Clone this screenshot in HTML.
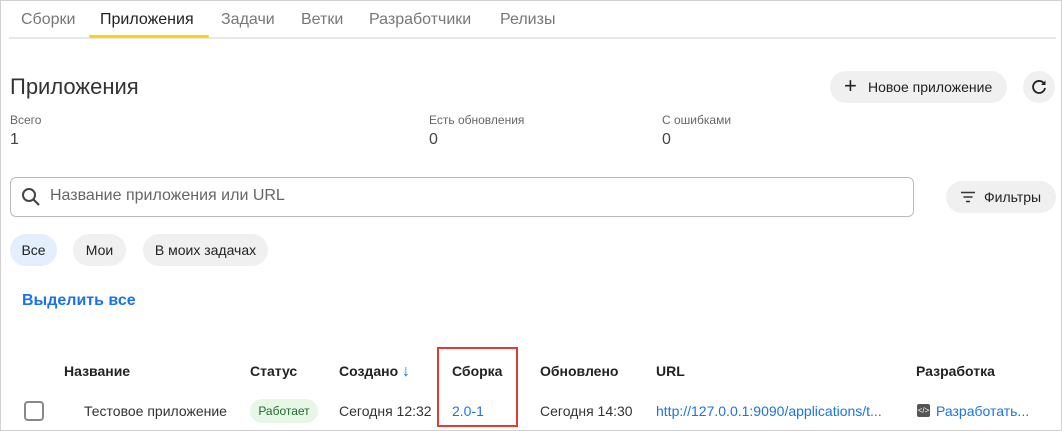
<!DOCTYPE html>
<html><head><meta charset="utf-8"><style>
*{margin:0;padding:0;box-sizing:border-box}
body{width:1062px;height:430px;overflow:hidden;background:#fff;font-family:"Liberation Sans",sans-serif;color:#222;position:relative}
.a{position:absolute;white-space:nowrap}
.tab{font-size:16px;color:#777;top:11px}
.chip{position:absolute;top:234px;height:32px;border-radius:16px;background:#f0f0f0;font-size:14px;line-height:32px;text-align:center;color:#222}
.th{top:363px;font-size:14px;font-weight:bold;color:#222}
.td{top:403px;font-size:14px;color:#333}
.lnk{color:#1a73e8}
</style></head><body>
<div class="a" style="left:0;top:0;width:1062px;height:431px;border:1px solid #d0d0d0"></div>
<div class="a tab" style="left:21px">Сборки</div>
<div class="a tab" style="left:100px;color:#222">Приложения</div>
<div class="a tab" style="left:221px">Задачи</div>
<div class="a tab" style="left:301px">Ветки</div>
<div class="a tab" style="left:369px">Разработчики</div>
<div class="a tab" style="left:500px">Релизы</div>
<div class="a" style="left:9px;top:37px;width:1047px;height:2px;background:#e8e8e8"></div>
<div class="a" style="left:89px;top:35px;width:120px;height:3px;background:#f5d90a;border-radius:2px"></div>

<div class="a" style="left:10px;top:74px;font-size:22px;color:#333">Приложения</div>
<div class="a" style="left:10px;top:113px;font-size:12px;color:#666">Всего</div>
<div class="a" style="left:10px;top:131px;font-size:16px;color:#444">1</div>
<div class="a" style="left:429px;top:113px;font-size:12px;color:#666">Есть обновления</div>
<div class="a" style="left:429px;top:131px;font-size:16px;color:#444">0</div>
<div class="a" style="left:662px;top:113px;font-size:12px;color:#666">С ошибками</div>
<div class="a" style="left:662px;top:131px;font-size:16px;color:#444">0</div>

<div class="a" style="left:830px;top:71px;width:177px;height:32px;border-radius:16px;background:#f0f0f0;font-size:14px;line-height:32px;color:#222"><span style="position:absolute;left:14px;top:-1px;font-size:22px">+</span><span style="position:absolute;left:38px">Новое приложение</span></div>
<div class="a" style="left:1023px;top:71px;width:32px;height:32px;border-radius:16px;background:#f0f0f0"><svg width="32" height="32" viewBox="0 0 32 32"><path d="M21 12.5A6 6 0 1 0 22 17" fill="none" stroke="#222" stroke-width="1.8"/><path d="M22.5 9.5v4.5h-4.5z" fill="#222"/></svg></div>

<div class="a" style="left:10px;top:177px;width:904px;height:40px;border:1px solid #bbb;border-radius:6px"></div>
<svg class="a" style="left:20px;top:186px" width="22" height="22" viewBox="0 0 22 22"><circle cx="9" cy="9" r="6" fill="none" stroke="#444" stroke-width="2"/><path d="M13.5 13.5L19 19" stroke="#444" stroke-width="2.2"/></svg>
<div class="a" style="left:50px;top:187px;font-size:16px;color:#666">Название приложения или URL</div>
<div class="a" style="left:946px;top:181px;width:110px;height:32px;border-radius:16px;background:#f0f0f0;font-size:14px;line-height:32px"><svg style="position:absolute;left:14px;top:10px" width="16" height="12"><path d="M1 1.5h14M3.5 6h9M6 10.5h4" stroke="#333" stroke-width="1.6"/></svg><span style="position:absolute;left:38px">Фильтры</span></div>

<div class="chip" style="left:10px;width:47px;background:#e3effc">Все</div>
<div class="chip" style="left:73px;width:53px">Мои</div>
<div class="chip" style="left:143px;width:125px">В моих задачах</div>

<div class="a" style="left:22px;top:292px;font-size:16px;font-weight:bold;color:#1a73e8">Выделить все</div>

<div class="a th" style="left:64px">Название</div>
<div class="a th" style="left:250px">Статус</div>
<div class="a th" style="left:339px">Создано <span style="color:#1a73e8;font-size:16px">&#8595;</span></div>
<div class="a th" style="left:452px">Сборка</div>
<div class="a th" style="left:540px">Обновлено</div>
<div class="a th" style="left:656px">URL</div>
<div class="a th" style="left:916px">Разработка</div>

<div class="a" style="left:24px;top:401px;width:20px;height:20px;border:2px solid #888;border-radius:4px"></div>
<div class="a td" style="left:84px">Тестовое приложение</div>
<div class="a" style="left:250px;top:399px;width:68px;height:24px;border-radius:12px;background:#e6f7e8;color:#1d6b2a;font-size:12px;line-height:24px;text-align:center">Работает</div>
<div class="a td" style="left:339px">Сегодня 12:32</div>
<div class="a td lnk" style="left:452px">2.0-1</div>
<div class="a td" style="left:540px">Сегодня 14:30</div>
<div class="a td lnk" style="left:656px">http://127.0.0.1:9090/applications/t...</div>
<div class="a" style="left:917px;top:404px;width:13px;height:13px;background:#555;border-radius:2px;color:#fff;font-size:8px;line-height:13px;text-align:center">&lt;/&gt;</div>
<div class="a td lnk" style="left:936px">Разработать...</div>

<div class="a" style="left:437px;top:347px;width:81px;height:80px;border:2px solid #e53935"></div>
</body></html>
